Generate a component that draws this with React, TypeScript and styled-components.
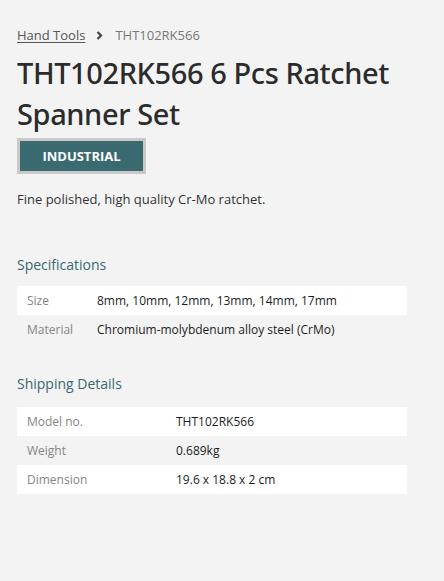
import styled, { createGlobalStyle } from "styled-components";

const GlobalStyle = createGlobalStyle`
  html, body {
    margin: 0;
    background: #f3f3f3;
  }
  body {
    font-family: "Open Sans", "Liberation Sans", sans-serif;
    color: #333;
  }
`;

const specs = [
  { label: "Size", value: "8mm, 10mm, 12mm, 13mm, 14mm, 17mm" },
  { label: "Material", value: "Chromium-molybdenum alloy steel (CrMo)" },
];

const shipping = [
  { label: "Model no.", value: "THT102RK566" },
  { label: "Weight", value: "0.689kg" },
  { label: "Dimension", value: "19.6 x 18.8 x 2 cm" },
];

export default function App() {
  return (
    <Page>
      <GlobalStyle />
      <Breadcrumb>
        <CrumbLink href="#">Hand Tools</CrumbLink>
        <Chevron viewBox="0 0 10 10">
          <path d="M3.2 1.8 L6.4 5 L3.2 8.2" />
        </Chevron>
        <CrumbCurrent>THT102RK566</CrumbCurrent>
      </Breadcrumb>
      <Title>THT102RK566 6 Pcs Ratchet Spanner Set</Title>
      <Badge>INDUSTRIAL</Badge>
      <Description>Fine polished, high quality Cr-Mo ratchet.</Description>

      <SectionTitle>Specifications</SectionTitle>
      <Table>
        {specs.map((row) => (
          <Row key={row.label} $labelWidth={70}>
            <Label>{row.label}</Label>
            <Value>{row.value}</Value>
          </Row>
        ))}
      </Table>

      <SectionTitle>Shipping Details</SectionTitle>
      <Table>
        {shipping.map((row) => (
          <Row key={row.label} $labelWidth={149}>
            <Label>{row.label}</Label>
            <Value>{row.value}</Value>
          </Row>
        ))}
      </Table>
    </Page>
  );
}

const Page = styled.div`
  padding: 26px 37px 60px 17px;
  min-height: 581px;
  box-sizing: border-box;
`;

const Breadcrumb = styled.nav`
  display: flex;
  align-items: center;
  gap: 7px;
  font-size: 13px;
  line-height: 18px;
`;

const CrumbLink = styled.a`
  color: #555;
  text-decoration: underline;
  text-underline-offset: 2px;
`;

const Chevron = styled.svg`
  width: 11px;
  height: 11px;
  margin: 0 3px 0 2px;
  fill: none;
  stroke: #444;
  stroke-width: 2;
`;

const CrumbCurrent = styled.span`
  color: #777;
`;

const Title = styled.h1`
  margin: 8px 0 4px;
  font-family: "Noto Sans", "Open Sans", sans-serif;
  font-weight: 500;
  font-size: 29px;
  line-height: 41px;
  letter-spacing: -0.4px;
  color: #2b2b2b;
`;

const Badge = styled.div`
  display: inline-flex;
  align-items: center;
  justify-content: center;
  width: 123px;
  height: 30px;
  border: 3px solid #c9c9c9;
  background: #396a70;
  color: #fff;
  font-weight: 700;
  font-size: 13px;
`;

const Description = styled.p`
  margin: 16px 0 0;
  font-size: 13px;
  line-height: 18px;
  color: #333;
`;

const SectionTitle = styled.h2`
  margin: 47px 0 11px;
  font-size: 14px;
  font-weight: 500;
  line-height: 20px;
  color: #376870;

  & + div + & {
    margin-top: 30px;
    margin-bottom: 13px;
  }
`;

const Table = styled.div`
  display: flex;
  flex-direction: column;
`;

const Row = styled.div<{ $labelWidth: number }>`
  display: grid;
  grid-template-columns: ${(p) => p.$labelWidth}px 1fr;
  align-items: center;
  height: 29px;
  padding-left: 10px;
  font-size: 12px;

  &:nth-child(odd) {
    background: #fff;
  }
`;

const Label = styled.span`
  color: #858585;
  font-weight: 500;
`;

const Value = styled.span`
  color: #1c1c1c;
  font-weight: 500;
`;
